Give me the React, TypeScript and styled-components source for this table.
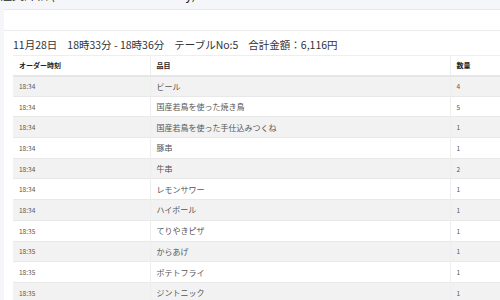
import styled, { createGlobalStyle } from "styled-components";

const GlobalStyle = createGlobalStyle`
  html, body {
    margin: 0;
    padding: 0;
    background: #f4f6f9;
    font-family: "Noto Sans CJK JP", "Noto Sans", sans-serif;
    color: #333;
    overflow: hidden;
  }
`;

const Page = styled.div`
  padding-left: 4px;
  width: 700px;
`;

const PageTitle = styled.h1`
  margin: -13px 0 0 -4px;
  height: 16px;
  font-size: 12px;
  font-weight: 400;
  line-height: 16px;
  color: #222;
  white-space: nowrap;
`;

const Card = styled.div`
  margin-top: 6px;
  background: #fff;
  border-top: 1px solid #e8e8ec;
`;

const CardHeader = styled.div`
  height: 20px;
  border-bottom: 1px solid #ececec;
`;

const CardBody = styled.div`
  padding: 6px 0 0 9px;
`;

const Summary = styled.div`
  font-size: 10.5px;
  line-height: 16px;
  height: 16px;
  margin-bottom: 2px;
  color: #333;
  white-space: nowrap;
  span + span {
    margin-left: 10px;
  }
`;

const Table = styled.table`
  border-collapse: collapse;
  table-layout: fixed;
  width: 680px;
`;

const HeadCell = styled.th`
  text-align: left;
  font-size: 7px;
  font-weight: 700;
  color: #222;
  height: 20px;
  padding: 0 6px;
  border-top: 1px solid #eee;
  border-bottom: 2px solid #e6e6e6;
  border-right: 1px solid #eee;
  box-sizing: border-box;
`;

const Row = styled.tr<{ $striped: boolean }>`
  background: ${(p) => (p.$striped ? "#f2f2f2" : "#fff")};
`;

const Cell = styled.td<{ $small?: boolean }>`
  font-size: ${(p) => (p.$small ? "6.5px" : "8px")};
  color: #555;
  height: 20.7px;
  padding: 0 6px;
  border-top: 1px solid #e8e8e8;
  border-right: 1px solid #eee;
  box-sizing: border-box;
  white-space: nowrap;
`;

const orders = [
  { time: "18:34", item: "ビール", qty: 4 },
  { time: "18:34", item: "国産若鳥を使った焼き鳥", qty: 5 },
  { time: "18:34", item: "国産若鳥を使った手仕込みつくね", qty: 1 },
  { time: "18:34", item: "豚串", qty: 1 },
  { time: "18:34", item: "牛串", qty: 2 },
  { time: "18:34", item: "レモンサワー", qty: 1 },
  { time: "18:34", item: "ハイボール", qty: 1 },
  { time: "18:35", item: "てりやきピザ", qty: 1 },
  { time: "18:35", item: "からあげ", qty: 1 },
  { time: "18:35", item: "ポテトフライ", qty: 1 },
  { time: "18:35", item: "ジントニック", qty: 1 },
];

export default function App() {
  return (
    <>
      <GlobalStyle />
      <Page>
        <PageTitle>注文詳細 (Table No:5 Order History)</PageTitle>
        <Card>
          <CardHeader />
          <CardBody>
            <Summary>
              <span>11月28日</span>
              <span>18時33分 - 18時36分</span>
              <span>テーブルNo:5</span>
              <span>合計金額：6,116円</span>
            </Summary>
            <Table>
              <colgroup>
                <col style={{ width: 137 }} />
                <col style={{ width: 300 }} />
                <col />
              </colgroup>
              <thead>
                <tr>
                  <HeadCell>オーダー時刻</HeadCell>
                  <HeadCell>品目</HeadCell>
                  <HeadCell>数量</HeadCell>
                </tr>
              </thead>
              <tbody>
                {orders.map((o, i) => (
                  <Row key={i} $striped={i % 2 === 0}>
                    <Cell $small>{o.time}</Cell>
                    <Cell>{o.item}</Cell>
                    <Cell $small>{o.qty}</Cell>
                  </Row>
                ))}
              </tbody>
            </Table>
          </CardBody>
        </Card>
      </Page>
    </>
  );
}
